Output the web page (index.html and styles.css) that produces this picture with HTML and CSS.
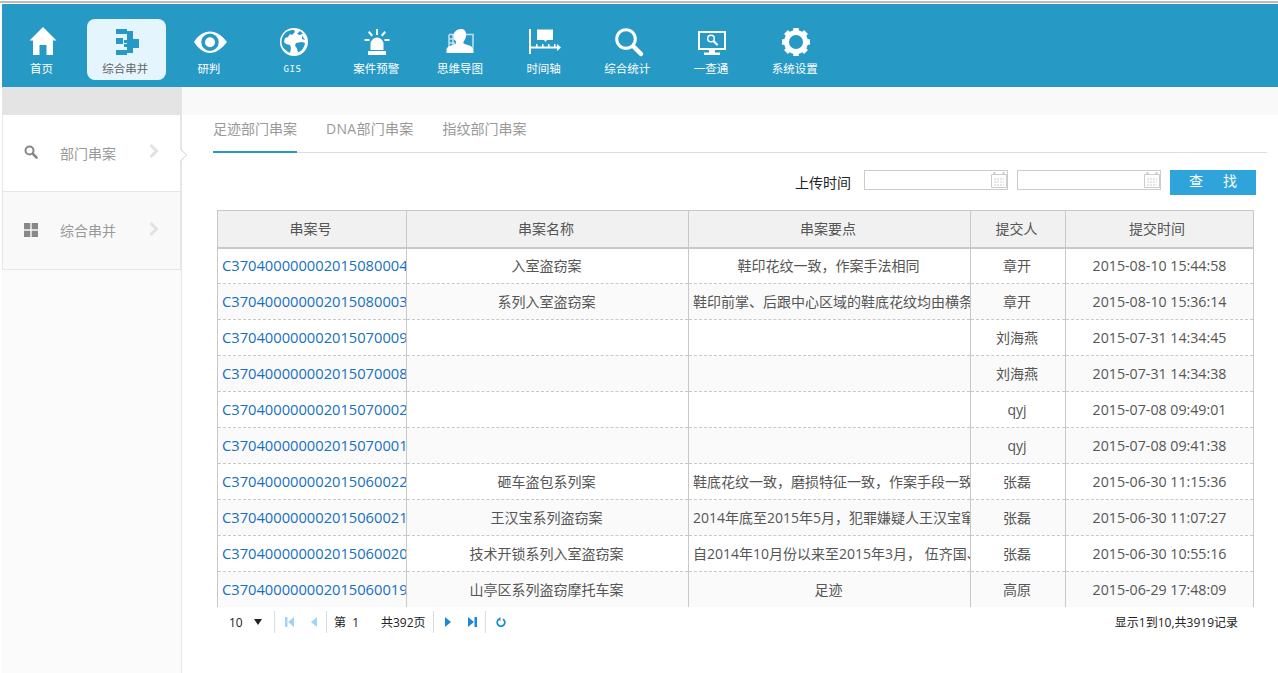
FILE: index.html
```html
<!DOCTYPE html>
<html lang="zh-CN">
<head>
    <meta charset="UTF-8">
    <title>综合串并</title>
    <link rel="stylesheet" href="styles.css">
</head>
<body>
    <div class="top-line"></div>
    <div class="header">
        <a class="nav-item">
            <svg class="nav-icon" viewBox="0 0 32 32"><path fill="#fff" d="M16 1 29.500 14.500H26V29H19.500V19h-7V29H6V14.500H2.500Z"/></svg>
            <span>首页</span>
        </a>
        <a class="nav-item active">
            <svg class="nav-icon" viewBox="0 0 32 32"><path fill="#2799c5" d="M6 3h11v2h6v8h6v9h-6v5h-6v2H6v-5h11v-3h-3v-3h3v-1h-3v-3h3V8H6ZM6 12h7v6H6Z"/></svg>
            <span>综合串并</span>
        </a>
        <a class="nav-item">
            <svg class="nav-icon" viewBox="0 0 32 32"><path fill="#fff" fill-rule="evenodd" d="M0 16C4 9.500 10 5.500 16 5.500S28 9.500 33 16C28 22.500 22 27 16 27S4 22.500 0 16ZM16 7.500a8.700 8.700 0 1 0 0 17.400 8.700 8.700 0 0 0 0-17.400Zm0 3.700a5 5 0 1 1 0 10 5 5 0 0 1 0-10Z"/></svg>
            <span>研判</span>
        </a>
        <a class="nav-item">
            <svg class="nav-icon" viewBox="0 0 32 32"><circle cx="16" cy="16" r="14" fill="#fff"/><path fill="#2799c5" d="M9 5.500c2-1 5-1.800 7-1.500l1 2-3 3-2-1-2 3-3 1-1 4 2 2 4 1 1 3-1 5C6 24 3.500 20 3.500 16 3.500 11.500 6 7.500 9 5.500ZM19 8l3-3 3 2.500L22 9ZM24 9.500l3 4.500-3-1ZM18 17l6-1 3 1c-.5 4-3 8-7 9.500l-1-4-2-3Z"/></svg>
            <span class="latin">GIS</span>
        </a>
        <a class="nav-item">
            <svg class="nav-icon" viewBox="0 0 32 32"><path fill="#fff" d="M15 3h2v6h-2ZM7 6.500l1.500-1.400 3.500 4-1.500 1.400Zm18 0L23.500 5.100l-3.500 4 1.500 1.400ZM3.500 13h5v2h-5Zm20 0h5v2h-5ZM9.500 24v-6a6.500 6.500 0 0 1 13 0v6ZM7 25h18v4H7Z"/></svg>
            <span>案件预警</span>
        </a>
        <a class="nav-item">
            <svg class="nav-icon" viewBox="0 0 32 32"><path fill="none" stroke="#bfe3f1" stroke-width="1.500" d="M4 8.500h24v13M4 21V8.500M4 13h6M4 17h6M8 9v12"/><path fill="#fff" d="M16.500 3c3 0 4.700 2.500 4.700 5.500s-1.200 5.500-2.700 7v2c3 1.500 9 2 10 5.500v4H1.500v-4c1-3 7-4 9.500-5.500v-2c-1.500-1.500-2.500-4-2.500-6C8.500 8 10 3 16.500 3Z"/></svg>
            <span>思维导图</span>
        </a>
        <a class="nav-item">
            <svg class="nav-icon" viewBox="0 0 32 32"><path fill="#fff" d="M0 3h2v25H0ZM2 20.500h26V18l4 3.500-4 3.500v-2.500H2ZM8 3.500h16V14h-6l-1.500 2L15 14H8ZM7 18h1.500v3H7Zm6 0h1.500v3H13Zm6 0h1.500v3H19Zm6 0h1.500v3H25Z"/></svg>
            <span>时间轴</span>
        </a>
        <a class="nav-item">
            <svg class="nav-icon" viewBox="0 0 32 32"><circle cx="14" cy="13" r="9.300" fill="none" stroke="#fff" stroke-width="3"/><path fill="none" stroke="#fff" stroke-width="4.500" stroke-linecap="round" d="M21.500 20.500 29 28"/></svg>
            <span>综合统计</span>
        </a>
        <a class="nav-item">
            <svg class="nav-icon" viewBox="0 0 32 32"><path fill="#fff" fill-rule="evenodd" d="M2 5h28v19H19v2.500h5V29H8v-2.500h5V24H2Zm2 2v15h24V7Z"/><circle cx="15" cy="12.500" r="3.300" fill="none" stroke="#fff" stroke-width="1.500"/><path stroke="#fff" stroke-width="2.200" stroke-linecap="round" d="M18 15.500l3 3"/></svg>
            <span>一查通</span>
        </a>
        <a class="nav-item">
            <svg class="nav-icon" viewBox="0 0 32 32"><circle cx="16" cy="16" r="9.500" fill="none" stroke="#fff" stroke-width="5"/><path stroke="#fff" stroke-width="5.500" d="M16 2v5M16 25v5M2 16h5M25 16h5M6 6l3.500 3.500M22.500 22.500 26 26M26 6l-3.500 3.500M9.500 22.500 6 26"/></svg>
            <span>系统设置</span>
        </a>
    </div>

    <div class="page">
        <div class="sidebar">
            <div class="side-head"></div>
            <div class="side-menu">
                <div class="side-item current">
                    <svg class="side-icon" viewBox="0 0 14 14"><circle cx="5.500" cy="5.500" r="4" fill="none" stroke="#888" stroke-width="2"/><path stroke="#888" stroke-width="2.600" stroke-linecap="round" d="M9 9l3.500 3.500"/></svg>
                    <span class="side-text">部门串案</span>
                    <svg class="side-arrow" viewBox="0 0 10 14"><path fill="none" stroke="#e2e2e2" stroke-width="3" d="M1.500 1l6 6-6 6"/></svg>
                </div>
                <div class="side-item">
                    <svg class="side-icon" viewBox="0 0 14 14"><path fill="#888" d="M0 0h6.300v6.300H0ZM7.700 0H14v6.300H7.700ZM0 7.700h6.300V14H0ZM7.700 7.700H14V14H7.700Z"/></svg>
                    <span class="side-text">综合串并</span>
                    <svg class="side-arrow" viewBox="0 0 10 14"><path fill="none" stroke="#e2e2e2" stroke-width="3" d="M1.500 1l6 6-6 6"/></svg>
                </div>
            </div>
            <svg class="side-notch" viewBox="0 0 8 14"><path fill="#fff" stroke="#ccc" d="M0 .5l6.500 6.500L0 13.500"/></svg>
        </div>

        <div class="main">
            <div class="main-head"></div>
            <div class="tabs">
                <a class="tab active">足迹部门串案</a>
                <a class="tab dna">DNA部门串案</a>
                <a class="tab">指纹部门串案</a>
            </div>
            <div class="search-bar">
                <span class="search-label">上传时间</span>
                <div class="date-input">
                    <svg class="cal-icon" viewBox="0 0 16 16"><path fill="#fff" stroke="#ccc" d="M.5 2.500h15v13H.5Z"/><path stroke="#ccc" stroke-width="2" d="M3.500 0v3M12.500 0v3"/><path stroke="#ccc" stroke-dasharray="2 1" d="M3 7h10M3 10h10M3 13h10"/></svg>
                </div>
                <div class="date-input">
                    <svg class="cal-icon" viewBox="0 0 16 16"><path fill="#fff" stroke="#ccc" d="M.5 2.500h15v13H.5Z"/><path stroke="#ccc" stroke-width="2" d="M3.500 0v3M12.500 0v3"/><path stroke="#ccc" stroke-dasharray="2 1" d="M3 7h10M3 10h10M3 13h10"/></svg>
                </div>
                <button class="search-btn"><span>查</span><span>找</span></button>
            </div>
            <div class="table-wrap">
                <table class="case-table">
                    <colgroup>
                        <col class="col-no"><col class="col-name"><col class="col-point"><col class="col-user"><col class="col-time">
                    </colgroup>
                    <thead>
                        <tr><th>串案号</th><th>串案名称</th><th>串案要点</th><th>提交人</th><th>提交时间</th></tr>
                    </thead>
                    <tbody>
                        <tr><td class="case-no">C370400000002015080004</td><td>入室盗窃案</td><td>鞋印花纹一致，作案手法相同</td><td>章开</td><td>2015-08-10 15:44:58</td></tr>
                        <tr><td class="case-no">C370400000002015080003</td><td>系列入室盗窃案</td><td>鞋印前掌、后跟中心区域的鞋底花纹均由横条纹组成</td><td>章开</td><td>2015-08-10 15:36:14</td></tr>
                        <tr><td class="case-no">C370400000002015070009</td><td></td><td></td><td>刘海燕</td><td>2015-07-31 14:34:45</td></tr>
                        <tr><td class="case-no">C370400000002015070008</td><td></td><td></td><td>刘海燕</td><td>2015-07-31 14:34:38</td></tr>
                        <tr><td class="case-no">C370400000002015070002</td><td></td><td></td><td>qyj</td><td>2015-07-08 09:49:01</td></tr>
                        <tr><td class="case-no">C370400000002015070001</td><td></td><td></td><td>qyj</td><td>2015-07-08 09:41:38</td></tr>
                        <tr><td class="case-no">C370400000002015060022</td><td>砸车盗包系列案</td><td>鞋底花纹一致，磨损特征一致，作案手段一致，时间</td><td>张磊</td><td>2015-06-30 11:15:36</td></tr>
                        <tr><td class="case-no">C370400000002015060021</td><td>王汉宝系列盗窃案</td><td>2014年底至2015年5月，犯罪嫌疑人王汉宝窜至</td><td>张磊</td><td>2015-06-30 11:07:27</td></tr>
                        <tr><td class="case-no">C370400000002015060020</td><td>技术开锁系列入室盗窃案</td><td>自2014年10月份以来至2015年3月， 伍齐国、王某</td><td>张磊</td><td>2015-06-30 10:55:16</td></tr>
                        <tr><td class="case-no">C370400000002015060019</td><td>山亭区系列盗窃摩托车案</td><td>足迹</td><td>高原</td><td>2015-06-29 17:48:09</td></tr>
                    </tbody>
                </table>
            </div>
            <div class="pager">
                <span class="page-size">10<i class="caret"></i></span>
                <span class="sep"></span>
                <svg class="pg-icon first" viewBox="0 0 10 10"><path fill="#4aa9e6" d="M0 0h2.500v10H0ZM9 0v10L3 5Z"/></svg>
                <svg class="pg-icon prev" viewBox="0 0 10 10"><path fill="#4aa9e6" d="M8 0v10L2 5Z"/></svg>
                <span class="sep"></span>
                <span class="page-no">第&nbsp;&nbsp;1</span>
                <span class="page-total">共392页</span>
                <span class="sep"></span>
                <svg class="pg-icon next" viewBox="0 0 10 10"><path fill="#1a8ad4" d="M2 0v10l6-5Z"/></svg>
                <svg class="pg-icon last" viewBox="0 0 10 10"><path fill="#1a8ad4" d="M1 0v10l6-5ZM7.500 0H10v10H7.500Z"/></svg>
                <span class="sep"></span>
                <svg class="pg-icon reload" viewBox="0 0 10 10"><path fill="none" stroke="#1a8ad4" stroke-width="1.700" d="M3 2.200a3.800 3.800 0 1 0 4 0"/><path fill="#1a8ad4" d="M4.500 0v4L2 2Z"/></svg>
                <span class="page-info">显示1到10,共3919记录</span>
            </div>
        </div>
    </div>
</body>
</html>
```

FILE: styles.css
```css
html, body {
    height: 100%;
}

body {
    margin: 0;
    height: 673px;
    overflow: hidden;
    background: #fff;
    font-family: "Open Sans", "Noto Sans CJK SC", sans-serif;
    font-size: 14px;
    color: #555;
}

.top-line {
    height: 2px;
    margin: 1px 0;
    background: #bbb;
}

.header {
    display: flex;
    gap: 4.7px;
    height: 63px;
    margin-left: 2px;
    padding: 15px 0 5px 1px;
    background: #2799c5;
}

.nav-item {
    display: flex;
    flex-direction: column;
    align-items: center;
    width: 79px;
    height: 61px;
    padding: 7px 2px 0 0;
    box-sizing: border-box;
    border-radius: 8px;
    color: #fff;
    font-size: 11.5px;
    line-height: 16px;
}

.nav-item.active {
    background: #e4f5fd;
    color: #666;
}

.nav-icon {
    width: 32px;
    height: 32px;
    margin: 0 0 3px 2px;
    overflow: visible;
}

.latin {
    font-family: "DejaVu Sans Mono", monospace;
    font-size: 9px;
    letter-spacing: .6px;
}

.page {
    display: flex;
    height: 586px;
    margin-left: 2px;
}

.sidebar {
    position: relative;
    width: 180px;
    flex-shrink: 0;
    background: #fbfbfb;
}

.side-head {
    height: 28px;
    background: #e4e4e4;
}

.side-menu {
    height: 155px;
    border-right: 2px solid #e6e6e6;
    border-bottom: 1px solid #e6e6e6;
    border-left: 1px solid #e6e6e6;
    box-sizing: border-box;
}

.sidebar::after {
    content: "";
    position: absolute;
    top: 183px;
    right: 0;
    bottom: 0;
    width: 1px;
    background: #e6e6e6;
}

.side-item {
    display: flex;
    align-items: center;
    height: 77px;
    padding-left: 21px;
    box-sizing: border-box;
    background: #f9f9f9;
    color: #999;
}

.side-item.current {
    background: #fff;
    border-bottom: 1px solid #e6e6e6;
}

.side-icon {
    width: 14px;
    height: 14px;
    margin-top: -2px;
}

.side-text {
    width: 56px;
    margin-left: 22px;
    margin-top: -1px;
}

.side-arrow {
    width: 10px;
    height: 14px;
    margin-left: 33px;
    margin-top: -4px;
}

.side-notch {
    position: absolute;
    top: 61px;
    left: 178px;
    width: 8px;
    height: 14px;
}

.main {
    flex: 1;
    min-width: 0;
}

.main-head {
    height: 28px;
    background: #f9f9f9;
}

.tabs {
    display: flex;
    gap: 29px;
    height: 38px;
    margin: 0 11px 0 31px;
    box-sizing: border-box;
    border-bottom: 1px solid #ddd;
}

.tab {
    height: 38px;
    box-sizing: border-box;
    color: #999;
    line-height: 28px;
}

.tab.active {
    border-bottom: 2px solid #2799c5;
}

.tab.dna {
    letter-spacing: .28px;
}

.search-bar {
    display: flex;
    align-items: flex-start;
    height: 40px;
    padding: 17px 22px 0 0;
    justify-content: flex-end;
    color: #222;
}

.search-label {
    margin-right: 13px;
    line-height: 26px;
}

.date-input {
    position: relative;
    width: 144px;
    height: 20px;
    margin-right: 9px;
    box-sizing: border-box;
    border: 1px solid #ccc;
    background: #fff;
}

.cal-icon {
    position: absolute;
    top: 1px;
    right: 0;
    width: 16px;
    height: 16px;
}

.search-btn {
    display: flex;
    justify-content: center;
    gap: 20px;
    width: 86px;
    height: 25px;
    padding: 0 0 3px;
    border: none;
    background: #2fa4db;
    color: #fff;
    font-family: inherit;
    font-size: 14px;
    line-height: 22px;
}

.table-wrap {
    height: 397px;
    margin: 0 24px 0 35px;
    overflow: hidden;
}

.case-table {
    width: 1036px;
    table-layout: fixed;
    border-collapse: collapse;
}

.col-no { width: 189px; }
.col-name { width: 282px; }
.col-point { width: 282px; }
.col-user { width: 95px; }
.col-time { width: 188px; }

.case-table th {
    height: 37px;
    box-sizing: border-box;
    padding: 0 3px 2px 0;
    border: 1px solid #c8c8c8;
    border-bottom-width: 2px;
    background: #f1f1f1;
    font-weight: normal;
    color: #555;
}

.case-table th:nth-child(5) {
    padding-right: 5px;
}

.case-table td {
    height: 36px;
    box-sizing: border-box;
    padding: 0 6px 1px 4px;
    border-right: 1px solid #c8c8c8;
    border-left: 1px solid #c8c8c8;
    border-bottom: 1px dashed #c8c8c8;
    overflow: hidden;
    text-align: center;
    white-space: nowrap;
}

.case-table td:nth-child(5) {
    padding-right: 4px;
    font-size: 14.2px;
}

.case-table tbody tr:nth-child(even) td {
    background: #fafafa;
}

.case-table td.case-no {
    padding-right: 0;
    text-align: left;
    color: #1670c0;
    font-size: 14.7px;
}

.pager {
    display: flex;
    align-items: center;
    height: 30px;
    margin: 0 40px 0 47px;
    color: #222;
    font-size: 12px;
}

.page-size {
    display: flex;
    align-items: center;
    width: 45px;
}

.caret {
    width: 0;
    height: 0;
    margin-left: 11px;
    border-top: 6px solid #222;
    border-right: 4px solid transparent;
    border-left: 4px solid transparent;
}

.sep {
    width: 1px;
    height: 22px;
    background: #ddd;
}

.pg-icon {
    width: 10px;
    height: 10px;
}

.pg-icon.first {
    margin-left: 10px;
    opacity: .5;
}

.pg-icon.prev {
    margin: 0 7px 0 14px;
    opacity: .5;
}

.pg-icon.next {
    margin-left: 9px;
}

.pg-icon.last {
    margin: 0 8px 0 14px;
}

.pg-icon.reload {
    margin-left: 10px;
}

.page-no {
    width: 47px;
    margin-left: 7px;
}

.page-total {
    margin-right: 7px;
}

.page-info {
    margin-left: auto;
}
```
